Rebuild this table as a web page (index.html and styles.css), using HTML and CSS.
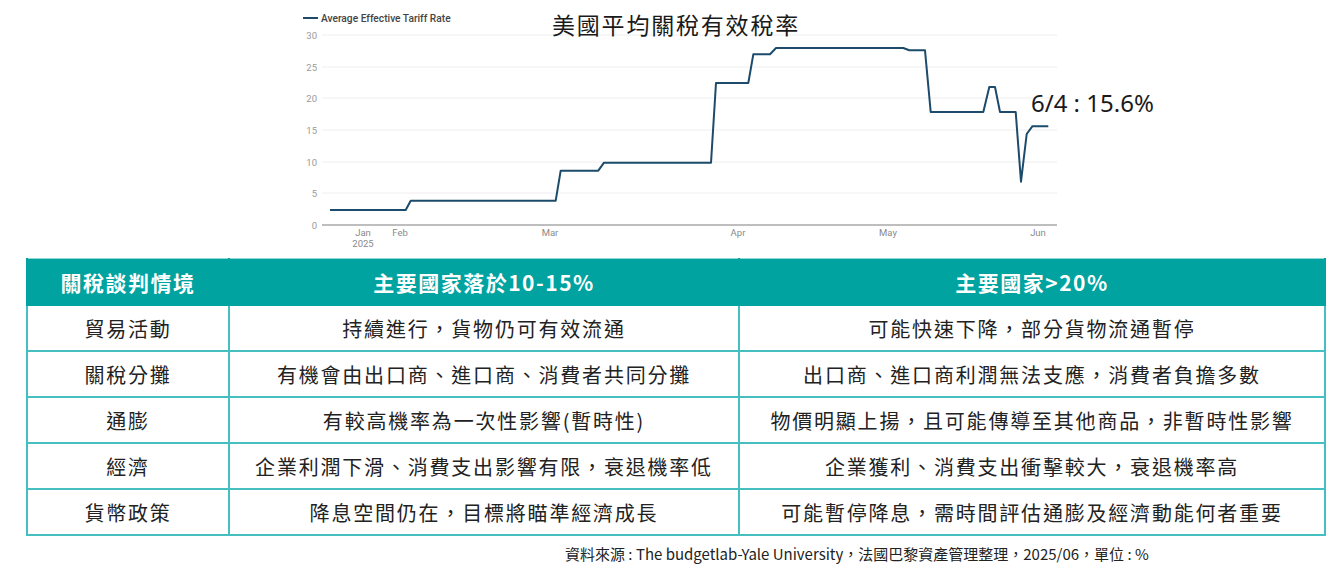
FILE: index.html
```html
<!DOCTYPE html>
<html lang="zh-Hant">
<head>
<meta charset="utf-8">
<link rel="stylesheet" href="styles.css">
</head>
<body>
<div class="page">
  <div class="chart">
    <svg class="chart-svg" width="1327" height="258" viewBox="0 0 1327 258">
      <g class="grid">
        <line x1="322" y1="35" x2="1057" y2="35"/>
        <line x1="322" y1="67" x2="1057" y2="67"/>
        <line x1="322" y1="98" x2="1057" y2="98"/>
        <line x1="322" y1="130" x2="1057" y2="130"/>
        <line x1="322" y1="162" x2="1057" y2="162"/>
        <line x1="322" y1="193" x2="1057" y2="193"/>
      </g>
      <line class="axis" x1="322" y1="225" x2="1057" y2="225"/>
      <g class="ylab">
        <text x="317" y="38.5">30</text>
        <text x="317" y="70.5">25</text>
        <text x="317" y="101.5">20</text>
        <text x="317" y="133.5">15</text>
        <text x="317" y="165.5">10</text>
        <text x="317" y="196.5">5</text>
        <text x="317" y="228.5">0</text>
      </g>
      <g class="xlab">
        <text x="363" y="235.5">Jan</text>
        <text x="363" y="246.5">2025</text>
        <text x="400" y="235.5">Feb</text>
        <text x="550" y="235.5">Mar</text>
        <text x="738" y="235.5">Apr</text>
        <text x="888" y="235.5">May</text>
        <text x="1038" y="235.5">Jun</text>
      </g>
      <line class="legend-line" x1="303" y1="18" x2="318" y2="18"/>
      <text class="legend-text" x="321" y="21.5">Average Effective Tariff Rate</text>
      <polyline class="series" points="330,210 405.7,210 410.7,200.7 555.7,200.7 560.7,170.7 598.3,170.7 604,162.7 711,162.7 716,83 748.3,83 753.3,54.3 770,54.3 776,48 903.3,48 909.3,50.3 925,50.3 930.7,112 983.3,112 989.3,87 995,87 1000,112 1015.7,112 1021,181.7 1026.7,134 1032.3,126.3 1048.3,126.3"/>
      <text class="title" x="676" y="34" text-anchor="middle">美國平均關稅有效稅率</text>
      <text class="note" x="1031" y="112">6/4 : 15.6%</text>
    </svg>
  </div>

  <table class="tbl">
    <colgroup>
      <col class="c1">
      <col class="c2">
      <col class="c3">
    </colgroup>
    <thead>
      <tr>
        <th>關稅談判情境</th>
        <th>主要國家落於10-15%</th>
        <th>主要國家&gt;20%</th>
      </tr>
    </thead>
    <tbody>
      <tr>
        <td>貿易活動</td>
        <td>持續進行，貨物仍可有效流通</td>
        <td>可能快速下降，部分貨物流通暫停</td>
      </tr>
      <tr>
        <td>關稅分攤</td>
        <td>有機會由出口商、進口商、消費者共同分攤</td>
        <td>出口商、進口商利潤無法支應，消費者負擔多數</td>
      </tr>
      <tr>
        <td>通膨</td>
        <td>有較高機率為一次性影響(暫時性)</td>
        <td>物價明顯上揚，且可能傳導至其他商品，非暫時性影響</td>
      </tr>
      <tr>
        <td>經濟</td>
        <td>企業利潤下滑、消費支出影響有限，衰退機率低</td>
        <td>企業獲利、消費支出衝擊較大，衰退機率高</td>
      </tr>
      <tr>
        <td>貨幣政策</td>
        <td>降息空間仍在，目標將瞄準經濟成長</td>
        <td>可能暫停降息，需時間評估通膨及經濟動能何者重要</td>
      </tr>
    </tbody>
  </table>

  <div class="source">資料來源 : The budgetlab-Yale University，法國巴黎資產管理整理，2025/06，單位 : %</div>
</div>
</body>
</html>
```

FILE: styles.css
```css
html, body {
  margin: 0;
  padding: 0;
  background: #ffffff;
}

body {
  font-family: "Noto Sans CJK TC", "Noto Sans", sans-serif;
  color: #222222;
}

.page {
  width: 1327px;
  height: 564px;
  overflow: hidden;
}

.chart {
  height: 258px;
}

.chart-svg {
  display: block;
}

.grid line {
  stroke: #eeeeee;
  stroke-width: 1;
}

.axis {
  stroke: #a8a8a8;
  stroke-width: 1.5;
}

.ylab text {
  font-family: Roboto, "Liberation Sans", sans-serif;
  font-size: 9.5px;
  fill: #9a9a9a;
  text-anchor: end;
}

.xlab text {
  font-family: Roboto, "Liberation Sans", sans-serif;
  font-size: 9.5px;
  fill: #8a8a8a;
  text-anchor: middle;
}

.legend-line {
  stroke: #1d4a6b;
  stroke-width: 2;
}

.legend-text {
  font-family: Roboto, "Liberation Sans", sans-serif;
  font-size: 10.2px;
  font-weight: 500;
  fill: #444444;
}

.series {
  fill: none;
  stroke: #1c4b6c;
  stroke-width: 2;
  stroke-linejoin: round;
}

.title {
  font-family: "Noto Sans CJK TC", sans-serif;
  font-size: 23px;
  letter-spacing: 1.8px;
  fill: #1a1a1a;
}

.note {
  font-family: "Noto Sans", "Noto Sans CJK TC", sans-serif;
  font-size: 24px;
  fill: #1a1a1a;
}

.tbl {
  margin-left: 26px;
  width: 1298px;
  border-collapse: collapse;
  table-layout: fixed;
}

.c1 { width: 202px; }
.c2 { width: 510px; }
.c3 { width: 586px; }

.tbl th {
  background: #00a39f;
  color: #ffffff;
  font-size: 21px;
  font-weight: 700;
  letter-spacing: 1.5px;
  height: 45px;
  padding: 0;
  text-align: center;
  vertical-align: middle;
  border: 2px solid #00a39f;
  border-top: 1px solid #8fd6d4;
}

.tbl td {
  font-size: 20px;
  letter-spacing: 1.8px;
  height: 44px;
  padding: 0;
  text-align: center;
  vertical-align: middle;
  border: 2px solid #45bfc0;
  color: #222222;
}

.source {
  margin-left: 565px;
  margin-top: 7px;
  font-size: 15px;
  color: #222222;
}
```
